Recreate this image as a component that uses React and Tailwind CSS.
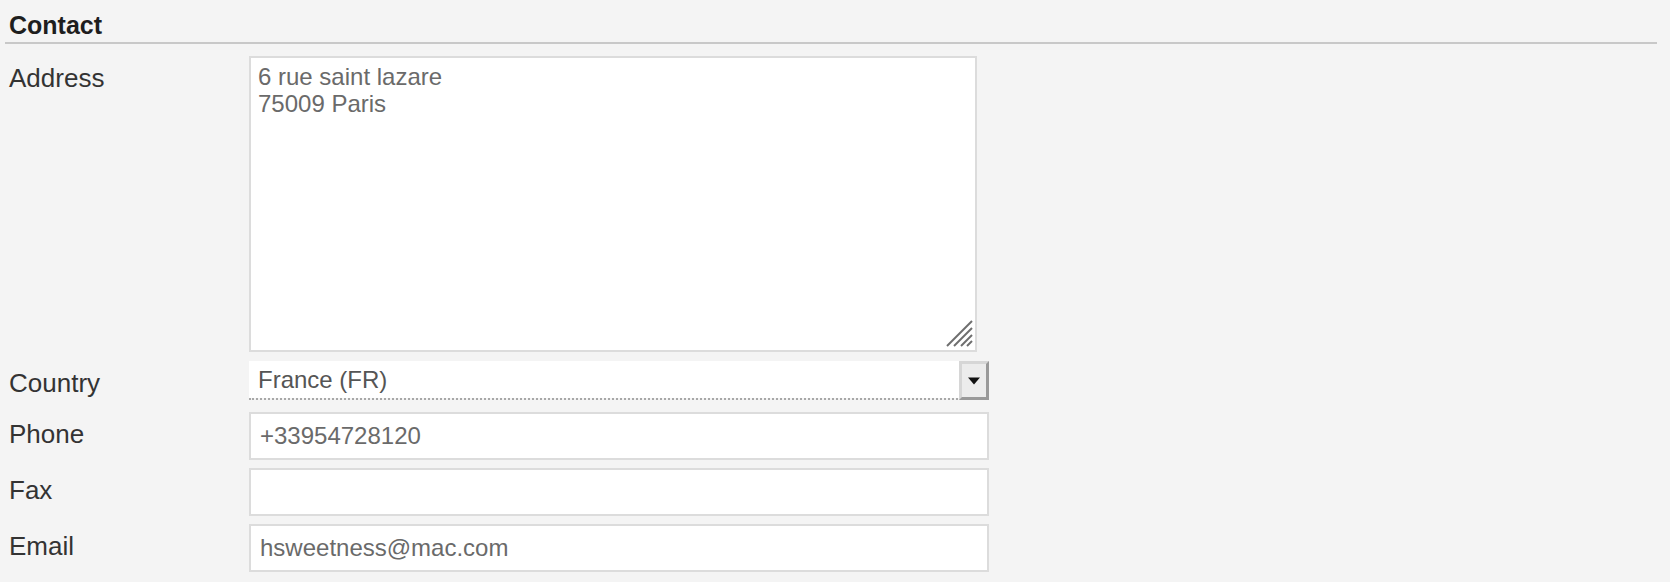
import React from 'react';

function Label({ children, pt = 'pt-[9px]' }) {
  return (
    <div className={`w-[244px] shrink-0 pl-[4px] ${pt} text-[26px] leading-[27px] text-[#333]`}>
      {children}
    </div>
  );
}

function TextField({ value }) {
  return (
    <input
      type="text"
      defaultValue={value}
      className="w-[740px] h-[48px] border-2 border-[#dcdcdc] bg-white px-[9px] text-[24px] leading-[27px] text-[#6a6a6a] outline-none"
    />
  );
}

function ResizeGrip() {
  return (
    <svg
      className="absolute right-[4px] bottom-[5px] pointer-events-none"
      width="28"
      height="28"
      viewBox="0 0 28 28"
    >
      <g stroke="#6e6e6e" strokeWidth="2">
        <line x1="2" y1="27" x2="27" y2="2" />
        <line x1="9" y1="27" x2="27" y2="9" />
        <line x1="16" y1="27" x2="27" y2="16" />
        <line x1="22" y1="27" x2="27" y2="22" />
      </g>
    </svg>
  );
}

function CountrySelect() {
  return (
    <div className="flex w-[740px] h-[39px] border-b-2 border-dotted border-[#a8a8a8]">
      <div className="flex-1 bg-white pl-[9px] pt-[5px] text-[24px] leading-[27px] text-[#555]">
        France (FR)
      </div>
      <div className="w-[30px] h-[39px] flex items-center justify-center bg-[#ececec] border-[3px] border-t-[#d6d6d6] border-l-[#d6d6d6] border-r-[#999] border-b-[#999]">
        <svg width="14" height="8" viewBox="0 0 14 8">
          <path d="M1 0.5 L13 0.5 L7 7.5 Z" fill="#111" />
        </svg>
      </div>
    </div>
  );
}

export default function App() {
  return (
    <div
      className="min-h-[582px] bg-[#f4f4f4] pl-[5px] pr-[13px]"
      style={{ fontFamily: '"Liberation Sans", Arial, sans-serif' }}
    >
      <div className="pt-[11px] pb-[3px] pl-[4px] border-b-2 border-[#c8c8c8]">
        <h2 className="text-[25px] leading-[28px] font-bold text-[#1e1e1e]">Contact</h2>
      </div>

      <div className="mt-[12px] flex">
        <Label pt="pt-[9px]">Address</Label>
        <div className="relative">
          <textarea
            defaultValue={'6 rue saint lazare\n75009 Paris'}
            className="block w-[728px] h-[296px] resize-none border-2 border-[#dcdcdc] bg-white px-[7px] pt-[5px] text-[24px] leading-[27px] text-[#6a6a6a] outline-none"
          />
          <ResizeGrip />
        </div>
      </div>

      <div className="mt-[9px] flex">
        <Label>Country</Label>
        <CountrySelect />
      </div>

      <div className="mt-[12px] flex flex-col gap-[8px]">
        <div className="flex">
          <Label>Phone</Label>
          <TextField value="+33954728120" />
        </div>
        <div className="flex">
          <Label>Fax</Label>
          <TextField value="" />
        </div>
        <div className="flex">
          <Label>Email</Label>
          <TextField value="hsweetness@mac.com" />
        </div>
      </div>
    </div>
  );
}
